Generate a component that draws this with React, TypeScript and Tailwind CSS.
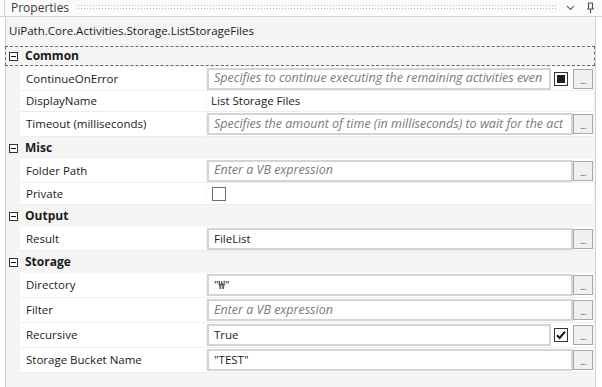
import React from "react";

const FONT = { fontFamily: '"Open Sans", "Noto Sans CJK KR", sans-serif' };

function Minus() {
  return (
    <svg width="9" height="9" viewBox="0 0 9 9" className="shrink-0">
      <rect x="0.5" y="0.5" width="8" height="8" fill="#fff" stroke="#333" />
      <line x1="2" y1="4.5" x2="7" y2="4.5" stroke="#111" />
    </svg>
  );
}

function Cat({ label, h, focus }: { label: string; h: string; focus?: boolean }) {
  return (
    <div className={`${h} flex items-center relative`}>
      {focus && (
        <div className="absolute left-[-1px] right-[0px] top-[1px] bottom-[1px] border border-dashed border-[#6a6a6a] pointer-events-none" />
      )}
      <div className="pl-[3px] flex items-center">
        <Minus />
        <span className="ml-[7px] font-bold text-[12px] text-[#1a1a1a]">{label}</span>
      </div>
    </div>
  );
}

function Prop({ name, h, children }: { name: string; h: string; children: React.ReactNode }) {
  return (
    <div className={`${h} flex pl-[14px] pr-[2px]`}>
      <div className="w-[186px] bg-white border-b border-[#eceeed] flex items-center pl-[6px] text-[11.5px] text-[#1a1a1a]">
        {name}
      </div>
      <div className="w-[1px]" />
      <div className="w-[386px] bg-white border-b border-[#eceeed] flex items-center">{children}</div>
    </div>
  );
}

function Btn() {
  return (
    <div className="ml-auto w-[20px] h-[20px] border border-[#a8a8a8] bg-[#f0f0f0] flex items-end justify-center pb-[3px] text-[9px] leading-none text-[#334] tracking-[-0.5px]">
      ...
    </div>
  );
}

function TB({ text, ph, w }: { text?: string; ph?: string; w: string }) {
  return (
    <div className={`${w} h-[22px] border-2 border-[#d4d4d4] bg-white flex items-center pl-[5px] pr-[1px] overflow-hidden`}>
      {text ? (
        <span className="block min-w-0 overflow-hidden whitespace-nowrap text-[11.5px] text-[#1a1a1a]">{text}</span>
      ) : (
        <span className="block min-w-0 overflow-hidden whitespace-nowrap italic text-[12.5px] text-[#7a7a7a]">{ph}</span>
      )}
    </div>
  );
}

function Check({ kind }: { kind: "fill" | "check" | "empty" }) {
  return (
    <svg width="14" height="14" viewBox="0 0 14 14" className="shrink-0">
      <rect x="0.5" y="0.5" width="13" height="13" fill="#fff" stroke={kind === "empty" ? "#6b6b6b" : "#333"} />
      {kind === "fill" && <rect x="3" y="3" width="8" height="8" fill="#1f1f1f" />}
      {kind === "check" && <path d="M3 7.2 L5.6 10 L11 3.6" fill="none" stroke="#111" strokeWidth="2" />}
    </svg>
  );
}

export default function App() {
  return (
    <div className="w-[602px] h-[387px] bg-white overflow-hidden relative" style={FONT}>
      {/* title bar */}
      <div className="h-[17px] flex items-center border-b border-[#d2d2d2] bg-[#fbfbfb]">
        <div className="w-[5px] h-full border-r border-[#d6d6d6]" />
        <span className="ml-[6px] text-[12px] text-[#3a3a3a] leading-none">Properties</span>
        <svg className="ml-[9px]" width="478" height="6" viewBox="0 0 478 6">
          <defs>
            <pattern id="dots" width="3" height="3" patternUnits="userSpaceOnUse">
              <rect x="0" y="0" width="1" height="1" fill="#b8b8b8" />
            </pattern>
          </defs>
          <rect x="0" y="0" width="478" height="6" fill="url(#dots)" />
        </svg>
        <svg className="ml-[10px]" width="9" height="6" viewBox="0 0 9 6">
          <path d="M1 1 L4.5 4.5 L8 1" fill="none" stroke="#6a6a6a" strokeWidth="1.2" />
        </svg>
        <svg className="ml-[11px]" width="9" height="12" viewBox="0 0 9 12">
          <path d="M2 1 H7 M2.5 1 V7 M6.5 1 V7 M1 7 H8 M4.5 7 V11" fill="none" stroke="#555" strokeWidth="1.2" />
        </svg>
      </div>
      {/* body */}
      <div className="flex h-[370px]">
        <div className="w-[5px]" />
        <div className="w-[591px] bg-[#f4f5f4] border-l border-r border-[#d2d2d2]">
          <div className="h-[28px] flex items-center pl-[3px] text-[11.5px] text-[#1a1a1a]">
            UiPath.Core.Activities.Storage.ListStorageFiles
          </div>
          <Cat label="Common" h="h-[22px]" focus />
          <Prop name="ContinueOnError" h="h-[24px]">
            <TB w="w-[344px]" ph="Specifies to continue executing the remaining activities even" />
            <div className="ml-[3px]">
              <Check kind="fill" />
            </div>
            <Btn />
          </Prop>
          <Prop name="DisplayName" h="h-[21px]">
            <span className="pl-[4px] text-[11.5px] text-[#1a1a1a]">List Storage Files</span>
          </Prop>
          <Prop name="Timeout (milliseconds)" h="h-[25px]">
            <TB w="w-[366px]" ph="Specifies the amount of time (in milliseconds) to wait for the act" />
            <Btn />
          </Prop>
          <Cat label="Misc" h="h-[22px]" />
          <Prop name="Folder Path" h="h-[24px]">
            <TB w="w-[366px]" ph="Enter a VB expression" />
            <Btn />
          </Prop>
          <Prop name="Private" h="h-[22px]">
            <div className="pl-[5px]">
              <Check kind="empty" />
            </div>
          </Prop>
          <Cat label="Output" h="h-[22px]" />
          <Prop name="Result" h="h-[24px]">
            <TB w="w-[366px]" text="FileList" />
            <Btn />
          </Prop>
          <Cat label="Storage" h="h-[22px]" />
          <Prop name="Directory" h="h-[25px]">
            <TB w="w-[366px]" text={'"₩"'} />
            <Btn />
          </Prop>
          <Prop name="Filter" h="h-[25px]">
            <TB w="w-[366px]" ph="Enter a VB expression" />
            <Btn />
          </Prop>
          <Prop name="Recursive" h="h-[25px]">
            <TB w="w-[344px]" text="True" />
            <div className="ml-[3px]">
              <Check kind="check" />
            </div>
            <Btn />
          </Prop>
          <Prop name="Storage Bucket Name" h="h-[25px]">
            <TB w="w-[366px]" text={'"TEST"'} />
            <Btn />
          </Prop>
        </div>
        <div className="flex-1 bg-white" />
      </div>
    </div>
  );
}
